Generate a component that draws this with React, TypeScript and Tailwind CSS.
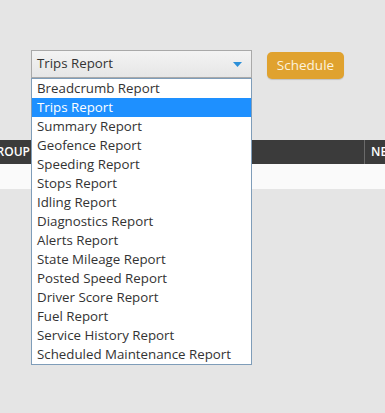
import React from "react";

const items = [
  "Breadcrumb Report",
  "Trips Report",
  "Summary Report",
  "Geofence Report",
  "Speeding Report",
  "Stops Report",
  "Idling Report",
  "Diagnostics Report",
  "Alerts Report",
  "State Mileage Report",
  "Posted Speed Report",
  "Driver Score Report",
  "Fuel Report",
  "Service History Report",
  "Scheduled Maintenance Report",
];

export default function App() {
  return (
    <div
      className="w-[385px] h-[413px] bg-[#e5e5e5] overflow-hidden relative text-[13.3px] text-[#333]"
      style={{ fontFamily: '"Open Sans", "Noto Sans", sans-serif' }}
    >
      <div className="pt-[50px] pl-[31px] flex items-start gap-[15px]">
        <div className="relative w-[221px]">
          <div className="h-[28px] border border-[#a9a9a9] bg-gradient-to-b from-[#f3f3f3] to-[#e6e6e6] flex items-center pl-[5px] pr-[9px] justify-between">
            <span>Trips Report</span>
            <svg width="9" height="5" viewBox="0 0 9 5">
              <path d="M0 0 L9 0 L4.5 5 Z" fill="#2b8fd8" />
            </svg>
          </div>
          <div className="absolute left-0 top-[28px] w-[221px] border border-[#7f9db9] bg-white z-10">
            {items.map((it) => (
              <div
                key={it}
                className={
                  "h-[19px] leading-[19px] pl-[5px] whitespace-nowrap " +
                  (it === "Trips Report" ? "bg-[#1e90ff] text-white" : "")
                }
              >
                {it}
              </div>
            ))}
          </div>
        </div>
        <button className="mt-[2px] h-[27px] w-[77px] rounded-[5px] bg-[#e0a22f] text-[#fdf3dc] text-[13.5px] shadow-[0_1px_1px_rgba(0,0,0,0.15)]">
          Schedule
        </button>
      </div>
      <div className="mt-[61px]">
        <div className="h-[24px] bg-[#3b3b3b] flex text-white font-semibold text-[12px]">
          <div className="w-[31px] overflow-hidden flex justify-end items-center pr-[1px]">
            <span className="whitespace-nowrap">GROUP</span>
          </div>
          <div className="w-[334px] border-r border-[#6a6a6a]" />
          <div className="flex-1 flex items-center pl-[6px] overflow-hidden whitespace-nowrap">
            NEXT
          </div>
        </div>
        <div className="h-[25px] bg-[#fafafa]" />
      </div>
    </div>
  );
}
